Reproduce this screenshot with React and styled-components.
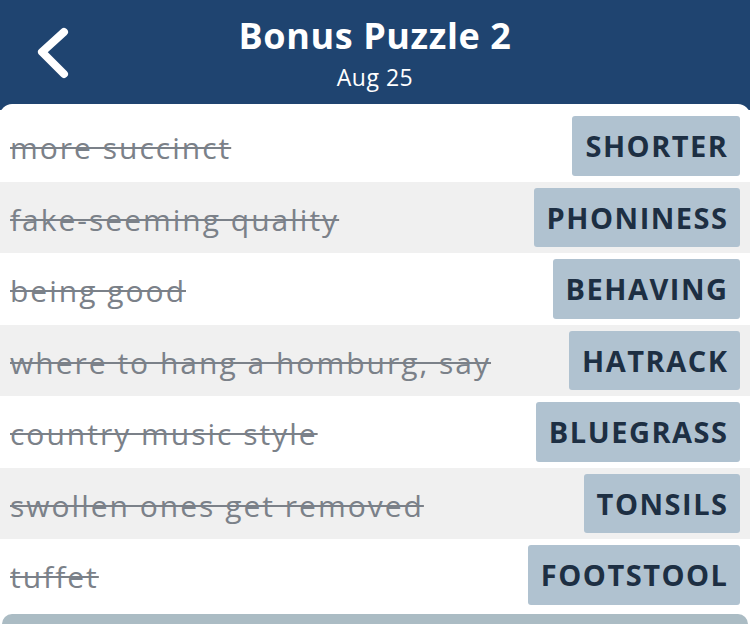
import React from "react";
import styled, { createGlobalStyle } from "styled-components";

const Global = createGlobalStyle`
  html, body { margin: 0; padding: 0; background: #1f4470; }
  body { font-family: "Open Sans", "Noto Sans", sans-serif; }
`;

const Page = styled.div`
  width: 750px;
  height: 624px;
  overflow: hidden;
  background: #1f4470;
  display: flex;
  flex-direction: column;
`;

const Header = styled.header`
  height: 104px;
  flex: none;
  position: relative;
  display: flex;
  flex-direction: column;
  align-items: center;
  color: #fff;
`;

const BackButton = styled.button`
  position: absolute;
  left: 30px;
  top: 24px;
  width: 48px;
  height: 60px;
  padding: 0;
  border: 0;
  background: transparent;
  cursor: pointer;
`;

const Title = styled.h1`
  margin: 13px 0 0;
  font-size: 36px;
  font-weight: 700;
  line-height: 46px;
  letter-spacing: 0.6px;
`;

const Subtitle = styled.div`
  font-size: 23px;
  line-height: 28px;
  margin-top: 4px;
  letter-spacing: 0.5px;
`;

const Panel = styled.main`
  flex: 1;
  background: #fff;
  border-radius: 12px 12px 0 0;
  padding-top: 6px;
  display: flex;
  flex-direction: column;
`;

const Row = styled.div`
  height: 71.5px;
  flex: none;
  box-sizing: border-box;
  padding: 6px 10px 6px 10px;
  display: flex;
  align-items: center;
  justify-content: space-between;
  background: ${(p) => (p.$alt ? "#f0f0f0" : "#fff")};
`;

const Clue = styled.span`
  font-size: 30px;
  letter-spacing: 2px;
  color: #7b8189;
  text-decoration: line-through;
  text-decoration-thickness: 2px;
  white-space: nowrap;
  margin-top: 4px;
`;

const Answer = styled.span`
  height: 100%;
  box-sizing: border-box;
  padding: 0 11.5px 0 13px;
  display: flex;
  align-items: center;
  background: #b0c2d0;
  border-radius: 3px;
  color: #1d2f43;
  font-size: 29px;
  font-weight: 700;
  letter-spacing: 1.5px;
`;

const Footer = styled.div`
  margin: 3px 2px 0;
  height: 40px;
  background: #abbcc4;
  border-radius: 10px 10px 0 0;
`;

const items = [
  ["more succinct", "SHORTER"],
  ["fake-seeming quality", "PHONINESS"],
  ["being good", "BEHAVING"],
  ["where to hang a homburg, say", "HATRACK"],
  ["country music style", "BLUEGRASS"],
  ["swollen ones get removed", "TONSILS"],
  ["tuffet", "FOOTSTOOL"],
];

export default function App() {
  return (
    <Page>
      <Global />
      <Header>
        <BackButton aria-label="Back">
          <svg width="48" height="60" viewBox="0 0 48 60">
            <polyline
              points="34,8 12,28 34,50"
              fill="none"
              stroke="#fff"
              strokeWidth="8"
              strokeLinecap="round"
              strokeLinejoin="round"
            />
          </svg>
        </BackButton>
        <Title>Bonus Puzzle 2</Title>
        <Subtitle>Aug 25</Subtitle>
      </Header>
      <Panel>
        {items.map(([clue, ans], i) => (
          <Row key={ans} $alt={i % 2 === 1}>
            <Clue>{clue}</Clue>
            <Answer>{ans}</Answer>
          </Row>
        ))}
        <Footer />
      </Panel>
    </Page>
  );
}
